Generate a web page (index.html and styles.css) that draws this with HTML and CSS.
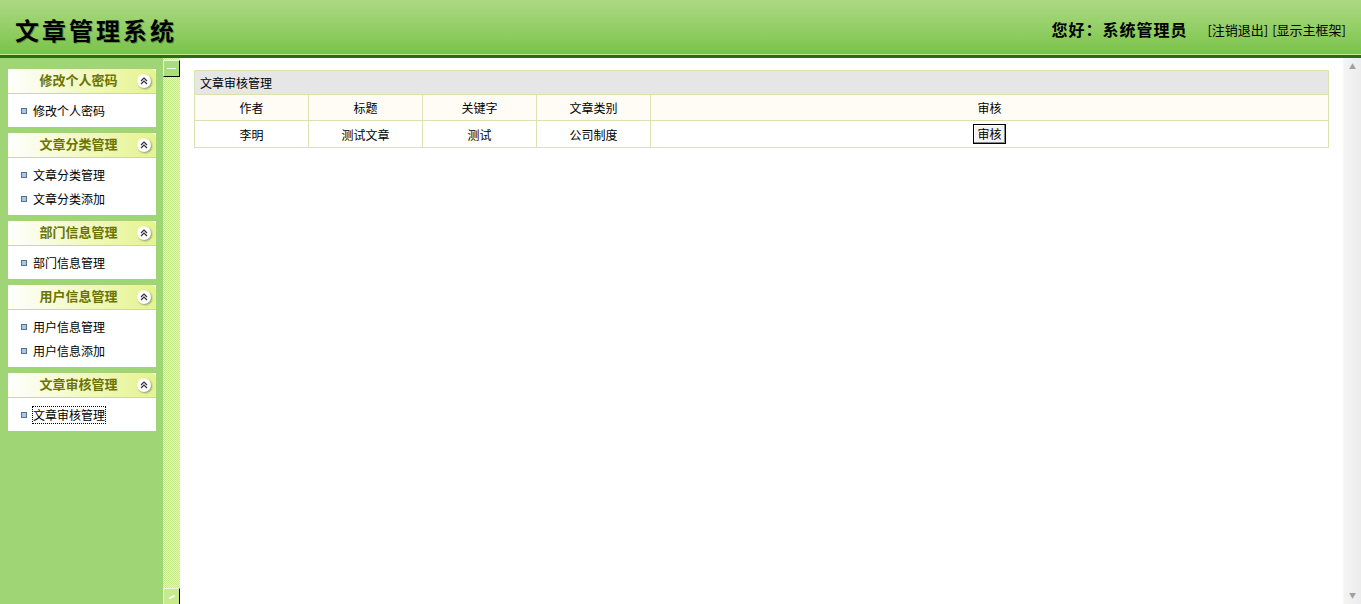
FILE: index.html
```html
<!DOCTYPE html>
<html lang="zh-CN">
<head>
    <meta charset="UTF-8">
    <title>文章管理系统</title>
    <link rel="stylesheet" href="styles.css">
</head>
<body>

    <!-- 顶部 -->
    <div class="top">
        <h1 class="logo">文章管理系统</h1>
        <div class="user">
            <span class="hello">您好：系统管理员</span>
            <a href="#">[注销退出]</a>
            <a href="#">[显示主框架]</a>
        </div>
    </div>

    <div class="main">
        <!-- 左侧菜单 -->
        <div class="left">
            <div class="panel">
                <div class="panel-title"><span>修改个人密码</span><i class="fold"><svg width="8" height="8" viewBox="0 0 8 8"><path d="M1 4 L4 1 L7 4 M1 7 L4 4 L7 7" fill="none" stroke="#333" stroke-width="1.2"/></svg></i></div>
                <ul class="panel-body">
                    <li><a href="#">修改个人密码</a></li>
                </ul>
            </div>
            <div class="panel">
                <div class="panel-title"><span>文章分类管理</span><i class="fold"><svg width="8" height="8" viewBox="0 0 8 8"><path d="M1 4 L4 1 L7 4 M1 7 L4 4 L7 7" fill="none" stroke="#333" stroke-width="1.2"/></svg></i></div>
                <ul class="panel-body">
                    <li><a href="#">文章分类管理</a></li>
                    <li><a href="#">文章分类添加</a></li>
                </ul>
            </div>
            <div class="panel">
                <div class="panel-title"><span>部门信息管理</span><i class="fold"><svg width="8" height="8" viewBox="0 0 8 8"><path d="M1 4 L4 1 L7 4 M1 7 L4 4 L7 7" fill="none" stroke="#333" stroke-width="1.2"/></svg></i></div>
                <ul class="panel-body">
                    <li><a href="#">部门信息管理</a></li>
                </ul>
            </div>
            <div class="panel">
                <div class="panel-title"><span>用户信息管理</span><i class="fold"><svg width="8" height="8" viewBox="0 0 8 8"><path d="M1 4 L4 1 L7 4 M1 7 L4 4 L7 7" fill="none" stroke="#333" stroke-width="1.2"/></svg></i></div>
                <ul class="panel-body">
                    <li><a href="#">用户信息管理</a></li>
                    <li><a href="#">用户信息添加</a></li>
                </ul>
            </div>
            <div class="panel">
                <div class="panel-title"><span>文章审核管理</span><i class="fold"><svg width="8" height="8" viewBox="0 0 8 8"><path d="M1 4 L4 1 L7 4 M1 7 L4 4 L7 7" fill="none" stroke="#333" stroke-width="1.2"/></svg></i></div>
                <ul class="panel-body">
                    <li><a href="#" class="focus">文章审核管理</a></li>
                </ul>
            </div>
        </div>

        <!-- 分隔条 -->
        <div class="split">
            <div class="split-btn up"><span></span></div>
            <div class="split-fill"></div>
            <div class="split-btn down"><span></span></div>
        </div>

        <!-- 右侧内容 -->
        <div class="right">
            <div class="content">
                <table class="list">
                    <tr class="caption"><td colspan="5">文章审核管理</td></tr>
                    <tr class="head">
                        <td class="w">作者</td>
                        <td class="w">标题</td>
                        <td class="w">关键字</td>
                        <td class="w">文章类别</td>
                        <td>审核</td>
                    </tr>
                    <tr>
                        <td>李明</td>
                        <td>测试文章</td>
                        <td>测试</td>
                        <td>公司制度</td>
                        <td><button class="btn">审核</button></td>
                    </tr>
                </table>
            </div>
            <!-- 滚动条 -->
            <div class="scroll">
                <div class="arrow">&#9650;</div>
                <div class="track"></div>
                <div class="arrow">&#9660;</div>
            </div>
        </div>
    </div>

</body>
</html>
```

FILE: styles.css
```css
body {
    margin: 0;
    font-family: "Noto Sans CJK SC", "Liberation Sans", sans-serif;
    font-size: 12px;
    color: #000;
    overflow: hidden;
}
a {
    color: #000;
    text-decoration: none;
}
/* 顶部 */
.top {
    height: 54px;
    background: linear-gradient(#acd983, #8fcd61 60%, #79c24a);
    border-bottom: 1px solid #c3ea9c;
    display: flex;
    align-items: center;
    justify-content: space-between;
    padding: 0 15px 0 15px;
    box-shadow: 0 3px 0 #2b6b12;
    position: relative;
}
.logo {
    margin: 4px 0 0 0;
    font-size: 24px;
    font-weight: bold;
    letter-spacing: 3px;
    text-shadow: 1px 1px 0 rgba(0, 60, 0, 0.35);
}
.user {
    display: flex;
    align-items: center;
    gap: 4px;
    margin-top: 4px;
}
.user .hello {
    font-size: 16px;
    font-weight: bold;
    letter-spacing: 1px;
    margin-right: 16px;
}
.user a {
    font-size: 13px;
}
.main {
    display: flex;
    height: 546px;
    margin-top: 3px;
}
/* 左侧菜单 */
.left {
    width: 148px;
    background: #a0d576;
    padding: 11px 7px 0 8px;
    display: flex;
    flex-direction: column;
    gap: 6px;
}
.panel {
    background: #fff;
}
.panel-title {
    height: 24px;
    border-radius: 5px 5px 0 0;
    background: linear-gradient(to right, #fff, #f3f9c8 45%, #e6f48e);
    border-bottom: 1px solid #cbd99d;
    display: flex;
    align-items: center;
    font-size: 13px;
    font-weight: bold;
    color: #6a7400;
}
.panel-title span {
    flex: 1;
    text-align: center;
    padding-left: 12px;
    margin-bottom: 3px;
}
.fold {
    width: 14px;
    height: 14px;
    border-radius: 50%;
    background: #fff;
    box-shadow: 1px 1px 2px #8a9a70;
    display: flex;
    align-items: center;
    justify-content: center;
    margin-right: 5px;
}
.panel-body {
    list-style: none;
    margin: 0;
    padding: 5px 0 4px 0;
}
.panel-body li {
    height: 24px;
    line-height: 24px;
    padding-left: 13px;
    display: flex;
    align-items: center;
}
.panel-body li::before {
    content: "";
    width: 4px;
    height: 4px;
    border: 1px solid #56708f;
    background: #a9c6ea;
    margin-right: 6px;
}
.panel-body a.focus {
    outline: 1px dotted #000;
    line-height: 16px;
}
/* 分隔条 */
.split {
    width: 17px;
    display: flex;
    flex-direction: column;
    background-color: #e2f4c2;
    background-image: repeating-conic-gradient(#c4e98b 0 25%, #e6f6c8 0 50%);
    background-size: 2px 2px;
}
.split-btn {
    height: 15px;
    width: 15px;
    background: #c6ea8c;
    border-top: 1px solid #e9f8d2;
    border-left: 1px solid #e9f8d2;
    border-right: 1px solid #000;
    border-bottom: 1px solid #000;
    display: flex;
    align-items: center;
    justify-content: center;
}
.split-btn.up {
    margin-top: 2px;
    background: #a9dc7a;
}
.split-btn span {
    width: 9px;
    height: 1px;
    background: #fff;
}
.split-btn.down {
    border-bottom: none;
}
.split-btn.down span {
    width: 6px;
    height: 2px;
    transform: rotate(-30deg);
}
.split-fill {
    flex: 1;
}
/* 右侧 */
.right {
    flex: 1;
    display: flex;
    background: #fff;
}
.content {
    flex: 1;
    padding: 12px 14px 0 14px;
}
.list {
    width: 100%;
    border-collapse: collapse;
    border: 1px solid #d9e2b0;
}
.list td {
    border: 1px solid #d9e2b0;
    height: 26px;
    padding: 0;
    text-align: center;
}
.list td.w {
    width: 113px;
}
.list .caption td {
    background: #e6e6e6;
    text-align: left;
    padding-left: 5px;
    height: 23px;
}
.list .head td {
    background: #fffbf5;
    height: 25px;
}
.btn {
    font-family: inherit;
    font-size: 12px;
    padding: 0 3px;
    height: 20px;
    line-height: 16px;
    background: #f2f2f2;
    border: 1px solid #000;
    box-shadow: inset -1px -1px 0 #888, inset 1px 1px 0 #fff;
}
/* 滚动条 */
.scroll {
    width: 17px;
    display: flex;
    flex-direction: column;
    background: linear-gradient(to right, #f4f4f4, #ececec);
    border-left: 1px solid #f7f7f7;
}
.arrow {
    height: 17px;
    font-size: 7px;
    color: #a0a0a0;
    text-align: center;
    line-height: 17px;
}
.track {
    flex: 1;
}
```
